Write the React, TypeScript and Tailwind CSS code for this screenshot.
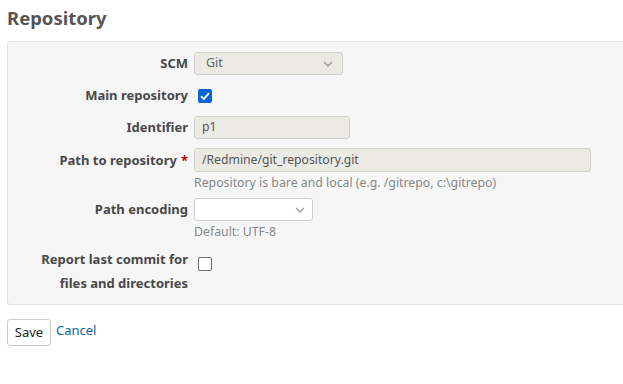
import React from "react";

const font = { fontFamily: '"Noto Sans", "Open Sans", sans-serif' };

function Chevron() {
  return (
    <svg width="10" height="6" viewBox="0 0 10 6" className="shrink-0">
      <path d="M1 1 L5 5 L9 1" fill="none" stroke="#9a9a9a" strokeWidth="1.3" />
    </svg>
  );
}

function Row({ label, required, children, lh = "23px" }: { label: React.ReactNode; required?: boolean; children: React.ReactNode; lh?: string }) {
  return (
    <div className="flex items-start">
      <div
        className="w-[186px] shrink-0 pr-[6px] text-right text-[13px] font-bold text-[#484848]"
        style={{ lineHeight: lh }}
      >
        {label}
        {required && <span className="ml-[4px] text-[#bb0000]">*</span>}
      </div>
      <div className="flex flex-col">{children}</div>
    </div>
  );
}

export default function App() {
  return (
    <div className="w-[623px] h-[384px] overflow-hidden bg-white" style={font}>
      <h2 className="ml-[7px] mt-[5px] text-[18.5px] font-bold leading-[26px] text-[#555]">Repository</h2>
      <div className="ml-[7px] mt-[10px] w-[640px] rounded-[3px] border border-[#e2e2e2] bg-[#f6f6f6] pt-[10px] pb-[9px]">
        <div className="flex flex-col">
          <Row label="SCM">
            <div className="flex h-[23px] w-[149px] items-center justify-between rounded-[3px] border border-[#cfcfcf] bg-[#ebeae5] pl-[11px] pr-[9px] text-[12.5px] text-[#666]">
              <span>Git</span>
              <Chevron />
            </div>
          </Row>
          <div className="mt-[9px]">
            <Row label="Main repository">
              <div className="flex h-[23px] items-center pl-[4px]">
                <span className="flex h-[14px] w-[14px] items-center justify-center rounded-[2px] bg-[#0b63d6]">
                  <svg width="10" height="8" viewBox="0 0 10 8">
                    <path d="M1 4.2 L3.8 7 L9 1.2" fill="none" stroke="white" strokeWidth="1.8" />
                  </svg>
                </span>
              </div>
            </Row>
          </div>
          <div className="mt-[9px]">
            <Row label="Identifier">
              <div className="flex h-[23px] w-[156px] items-center rounded-[3px] border border-[#cfcfcf] bg-[#ebeae5] pl-[7px] text-[12.2px] text-[#555]">
                p1
              </div>
            </Row>
          </div>
          <div className="mt-[9px]">
            <Row label="Path to repository" required lh="24px">
              <div className="flex h-[24px] w-[397px] items-center rounded-[3px] border border-[#cfcfcf] bg-[#ebeae5] pl-[7px] text-[12.2px] text-[#555]">
                /Redmine/git_repository.git
              </div>
              <div className="mt-[4px] text-[12.3px] leading-[14px] text-[#888]">
                Repository is bare and local (e.g. /gitrepo, c:\gitrepo)
              </div>
            </Row>
          </div>
          <div className="mt-[8px]">
            <Row label="Path encoding">
              <div className="flex h-[23px] w-[119px] items-center justify-end rounded-[3px] border border-[#cfcfcf] bg-white pr-[7px]">
                <Chevron />
              </div>
              <div className="mt-[4px] text-[12.3px] leading-[14px] text-[#888]">Default: UTF-8</div>
            </Row>
          </div>
          <div className="mt-[8px]">
            <Row
              label={
                <>
                  Report last commit for
                  <br />
                  files and directories
                </>
              }
              lh="24px"
            >
              <div className="flex h-[24px] items-end pl-[4px]">
                <span className="h-[14px] w-[14px] rounded-[2px] border-[1.5px] border-[#6f6f6f] bg-white"></span>
              </div>
            </Row>
          </div>
        </div>
      </div>
      <div className="ml-[7px] mt-[14px] flex items-start">
        <button className="h-[27px] w-[44px] rounded-[3px] border border-[#cccccc] bg-white text-[13px] text-[#222]" style={font}>
          Save
        </button>
        <a className="ml-[5px] mt-[1px] text-[13px] leading-[20px] text-[#116699]" href="#">
          Cancel
        </a>
      </div>
    </div>
  );
}
